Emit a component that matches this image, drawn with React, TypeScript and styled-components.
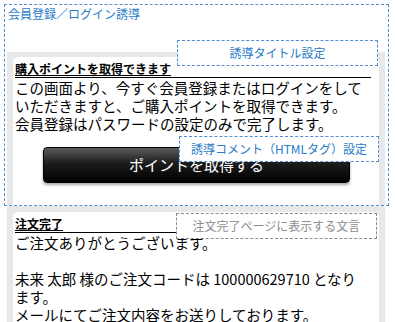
import { createGlobalStyle, styled } from "styled-components"

const GlobalStyle = createGlobalStyle`
  html, body {
    margin: 0;
    padding: 0;
    background: #ffffff;
    font-family: "Noto Sans CJK JP", "Noto Sans", sans-serif;
    color: #000000;
  }
  * {
    box-sizing: border-box;
  }
`

const BLUE = "#2a7cc9"
const BLUE_LINE = "#4f8ed2"
const PANEL_GRAY = "#e8e8e8"

export default function App() {
  return (
    <Root>
      <GlobalStyle />
      <Section>
        <Header>
          <SectionTitle>会員登録／ログイン誘導</SectionTitle>
        </Header>
        <Panel $inset={2} $paddingTop={5}>
          <Card $height={149}>
            <CardHeading>購入ポイントを取得できます</CardHeading>
            <CardBody>
              この画面より、今すぐ会員登録またはログインをしていただきますと、ご購入ポイントを取得できます。
              <br />
              会員登録はパスワードの設定のみで完了します。
            </CardBody>
            <ActionButton type="button">ポイントを取得する</ActionButton>
          </Card>
        </Panel>
        <EditLabel $tone="blue" $left={172} $top={35} $width={201}>
          誘導タイトル設定
        </EditLabel>
        <EditLabel $tone="blue" $left={174} $top={131} $width={200}>
          誘導コメント（HTMLタグ）設定
        </EditLabel>
      </Section>
      <Panel $inset={7} $paddingTop={6}>
        <Card>
          <CardHeading>注文完了</CardHeading>
          <CardBody>
            ご注文ありがとうございます。
            <br />
            <br />
            未来 太郎 様のご注文コードは 100000629710 となり
            <br />
            ます。
            <br />
            メールにてご注文内容をお送りしております。
          </CardBody>
          <EditLabel $tone="gray" $left={163} $top={1} $width={201}>
            注文完了ページに表示する文言
          </EditLabel>
        </Card>
      </Panel>
    </Root>
  )
}

const Root = styled.div`
  width: 395px;
  height: 322px;
  overflow: hidden;
  padding-top: 4px;
`

const Section = styled.section`
  position: relative;
  width: 385px;
  height: 202px;
  margin-left: 4px;
  border: 1px dashed ${BLUE_LINE};
  overflow: hidden;
`

const Header = styled.div`
  height: 47px;
  padding: 1px 0 0 3px;
`

const SectionTitle = styled.div`
  font-size: 12px;
  line-height: 16px;
  color: ${BLUE};
`

const Panel = styled.div<{ $inset: number; $paddingTop: number }>`
  width: 378px;
  margin-left: ${(p) => p.$inset}px;
  padding: ${(p) => p.$paddingTop}px 6px 0 6px;
  background: ${PANEL_GRAY};
`

const Card = styled.div<{ $height?: number }>`
  position: relative;
  height: ${(p) => (p.$height ? `${p.$height}px` : "auto")};
  padding: 4px 8px 20px 2px;
  background: #ffffff;
  border-radius: 5px 5px 0 0;
`

const CardHeading = styled.h3`
  margin: 0;
  font-size: 12px;
  line-height: 16px;
  font-weight: bold;
  text-decoration: underline;
  border-bottom: 1px solid #000000;
`

const CardBody = styled.p`
  margin: 1px 0 0 0;
  font-size: 14.5px;
  line-height: 18px;
`

const ActionButton = styled.button`
  display: block;
  width: 307px;
  height: 36px;
  margin: 14px 0 0 28px;
  padding: 0;
  border: 1px solid #000000;
  border-radius: 4px;
  background: linear-gradient(#5c5c5c 0%, #1c1c1c 45%, #000000 100%);
  box-shadow: 0 2px 3px rgba(0, 0, 0, 0.35);
  color: #ffffff;
  font-family: "Noto Sans CJK JP", sans-serif;
  font-size: 15px;
  line-height: 34px;
`

const EditLabel = styled.div<{
  $tone: "blue" | "gray"
  $left: number
  $top: number
  $width: number
}>`
  position: absolute;
  left: ${(p) => p.$left}px;
  top: ${(p) => p.$top}px;
  width: ${(p) => p.$width}px;
  height: 26px;
  border: 1px dashed ${(p) => (p.$tone === "blue" ? BLUE_LINE : "#8a8a8a")};
  background: #ffffff;
  color: ${(p) => (p.$tone === "blue" ? BLUE : "#8c8c8c")};
  font-size: 12px;
  line-height: 24px;
  text-align: center;
  white-space: nowrap;
`
